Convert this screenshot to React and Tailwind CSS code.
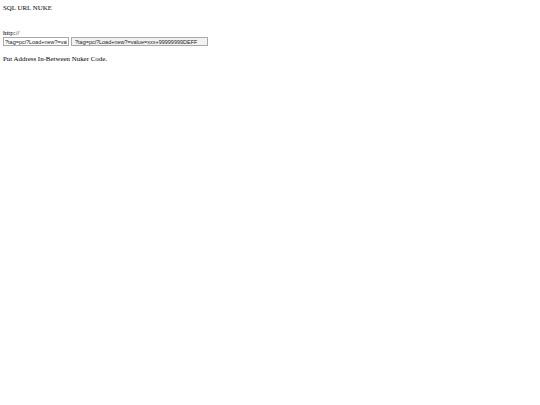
export default function App() {
  return (
    <div className="bg-white min-h-[405px] px-[3px] pt-[3px] text-black text-[6.9px] leading-[9px] font-['Liberation_Serif',serif]">
      <p>SQL URL NUKE</p>
      <div className="h-[16px]" />
      <p>http://</p>
      <div className="flex items-center gap-[2px]">
        <input
          type="text"
          defaultValue="?tag=pci?Load+new?=value=xxx+99999999DEFF"
          className="w-[66px] h-[9px] px-[1px] border border-[#a9a9a9] bg-white text-[5.5px] leading-[7px] font-['Liberation_Sans',sans-serif] text-[#222] outline-none"
        />
        <input
          type="text"
          defaultValue="?tag=pci?Load+new?=value=xxx+99999999DEFF"
          className="w-[137px] h-[9px] px-[3px] border border-[#a9a9a9] bg-[#f2f2f2] text-[5.5px] leading-[7px] font-['Liberation_Sans',sans-serif] text-[#222] outline-none"
        />
      </div>
      <p className="mt-[8px]">Put Address In-Between Nuker Code.</p>
    </div>
  );
}
